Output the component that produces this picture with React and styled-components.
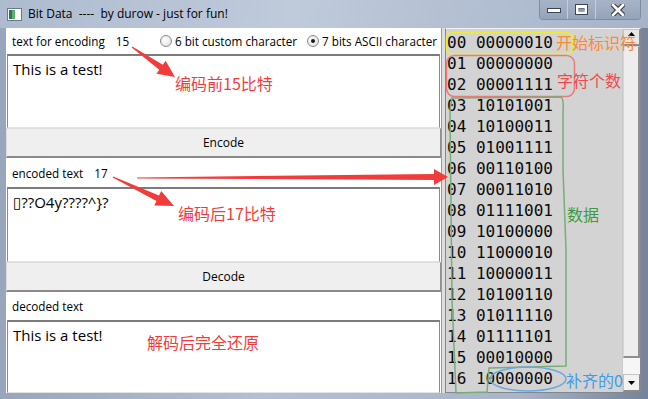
import React from 'react';
import styled, { createGlobalStyle } from 'styled-components';

const GlobalStyle = createGlobalStyle`
  html, body {
    margin: 0;
    padding: 0;
    background: #ffffff;
  }
`;

const bytes = [
  '00000010', '00000000', '00001111', '10101001', '10100011', '01001111',
  '00110100', '00011010', '01111001', '10100000', '11000010', '10000011',
  '10100110', '01011110', '01111101', '00010000', '10000000',
];

const Window = styled.div`
  position: relative;
  width: 648px;
  height: 399px;
  display: flex;
  flex-direction: column;
  overflow: hidden;
  font-family: "Open Sans", "Noto Sans", sans-serif;
  background: linear-gradient(90deg, #98a6bc 0%, #b3c0d3 40%, #a9b6c9 80%, #75839a 100%);
`;

const TitleBar = styled.div`
  height: 28px;
  display: flex;
  align-items: flex-start;
  flex-shrink: 0;
  background: linear-gradient(100deg, #aebbcf 0%, #bfcadb 45%, #a7b4c8 100%);
`;

const AppIcon = styled.svg`
  margin: 8px 0 0 7px;
  flex-shrink: 0;
`;

const Title = styled.div`
  margin: 6px 0 0 6px;
  font-size: 12px;
  line-height: 16px;
  color: #000;
  white-space: pre;
`;

const Controls = styled.div`
  margin-left: auto;
  margin-right: 7px;
  display: flex;
  height: 19px;
  border: 1px solid #7f8da4;
  border-top: none;
  border-radius: 0 0 4px 4px;
  overflow: hidden;
`;

const ControlButton = styled.div`
  width: ${(p) => p.w}px;
  height: 19px;
  display: flex;
  align-items: center;
  justify-content: center;
  background: linear-gradient(180deg, #a7b4c8 0%, #95a3b9 100%);
  border-left: ${(p) => (p.first ? 'none' : '1px solid #c3cddb')};
`;

const Body = styled.div`
  flex: 1;
  display: flex;
  padding: 0 7px 6px 6px;
  min-height: 0;
`;

const LeftPanel = styled.div`
  width: 435px;
  display: flex;
  flex-direction: column;
  background: #ffffff;
`;

const LabelRow = styled.div`
  height: ${(p) => p.h}px;
  display: flex;
  align-items: center;
  padding: 0 4px 0 6px;
  font-size: 11.7px;
  color: #000;
  flex-shrink: 0;
`;

const Count = styled.span`
  margin-left: 11px;
`;

const RadioGroup = styled.div`
  margin-left: auto;
  display: flex;
  align-items: center;
  gap: 10px;
`;

const RadioItem = styled.label`
  display: flex;
  align-items: center;
  gap: 3px;
`;

const RadioDot = styled.span`
  width: 10px;
  height: 10px;
  border-radius: 50%;
  border: 1px solid #8a8a8a;
  background: radial-gradient(circle at 40% 40%, #ffffff 0%, #e6e6e6 70%, #cfcfcf 100%);
  display: flex;
  align-items: center;
  justify-content: center;
  &::after {
    content: '';
    width: 4px;
    height: 4px;
    border-radius: 50%;
    background: ${(p) => (p.checked ? '#1a1a1a' : 'transparent')};
  }
`;

const TextBox = styled.div`
  height: ${(p) => p.h}px;
  margin: 0 1px;
  padding: 3px 5px;
  box-sizing: border-box;
  border: 1px solid #8a8a8a;
  border-top: 2px solid #7c7c7c;
  border-bottom-color: #e3e3e3;
  font-size: 15px;
  line-height: 20px;
  color: #000;
  flex-shrink: 0;
  font-family: "Open Sans", "DejaVu Sans", sans-serif;
`;

const ActionButton = styled.div`
  height: 30px;
  box-sizing: border-box;
  display: flex;
  align-items: center;
  justify-content: center;
  background: #efefef;
  border: 1px solid #dcdcdc;
  border-right-color: #8e8e8e;
  border-bottom: 2px solid #8a8a8a;
  font-size: 12px;
  color: #000;
  flex-shrink: 0;
`;

const Splitter = styled.div`
  width: 4px;
  background: #dedede;
  border-left: 1px solid #9a9a9a;
  box-sizing: border-box;
`;

const ListPanel = styled.div`
  flex: 1;
  display: flex;
  border: 1px solid #828790;
  border-top-color: #f2f2f2;
  background: #d3d3d3;
`;

const Rows = styled.div`
  flex: 1;
  padding: 3px 0 0 1px;
  font-family: "DejaVu Sans Mono", "Liberation Mono", monospace;
  font-size: 16px;
  line-height: 21px;
  color: #0a0a0a;
`;

const Row = styled.div`
  white-space: pre;
`;

const Scrollbar = styled.div`
  width: 17px;
  display: flex;
  flex-direction: column;
  background: #f4f4f4;
  border-left: 1px solid #c9c9c9;
`;

const ScrollArrow = styled.div`
  height: ${(p) => p.h}px;
  display: flex;
  justify-content: center;
  align-items: ${(p) => (p.up ? 'flex-start' : 'center')};
  padding-top: ${(p) => (p.up ? '2px' : '0')};
  box-sizing: border-box;
  background: ${(p) => (p.up ? '#e6e6e6' : '#f2f2f2')};
  border: 1px solid #c4c4c4;
  border-right-color: #8a8a8a;
  border-bottom: 2px solid #8a8a8a;
`;

const Thumb = styled.div`
  flex: 1;
  background: #ededed;
  border: 1px solid #d6d6d6;
  border-right: 2px solid #8f8f8f;
  border-bottom: 2px solid #8f8f8f;
`;

const Track = styled.div`
  height: 16px;
  background: #f6f6f6;
`;

const Overlay = styled.svg`
  position: absolute;
  left: 0;
  top: 0;
  pointer-events: none;
`;

const Note = styled.div`
  position: absolute;
  left: ${(p) => p.x}px;
  top: ${(p) => p.y}px;
  font-family: "Noto Sans CJK SC", "Noto Sans", sans-serif;
  font-size: 16px;
  line-height: 18px;
  color: ${(p) => p.c};
  white-space: nowrap;
`;

function arrow(x1, y1, x2, y2, headLen, headHalf, shaftHalf, tailHalf) {
  const dx = x2 - x1;
  const dy = y2 - y1;
  const len = Math.hypot(dx, dy);
  const ux = dx / len;
  const uy = dy / len;
  const nx = -uy;
  const ny = ux;
  const bx = x2 - ux * headLen;
  const by = y2 - uy * headLen;
  const pts = [
    [x1 + nx * tailHalf, y1 + ny * tailHalf],
    [bx + nx * shaftHalf, by + ny * shaftHalf],
    [bx + nx * headHalf, by + ny * headHalf],
    [x2, y2],
    [bx - nx * headHalf, by - ny * headHalf],
    [bx - nx * shaftHalf, by - ny * shaftHalf],
    [x1 - nx * tailHalf, y1 - ny * tailHalf],
  ];
  return pts.map((p) => p.map((v) => v.toFixed(1)).join(',')).join(' ');
}

export default function App() {
  return (
    <>
      <GlobalStyle />
      <Window>
        <TitleBar>
          <AppIcon width="15" height="13" viewBox="0 0 15 13">
            <rect x="0.5" y="0.5" width="14" height="12" fill="#f4f6f8" stroke="#6f7a88" />
            <rect x="2" y="2" width="3" height="9" fill="#2f6f6a" />
            <rect x="5" y="2" width="3" height="9" fill="#5bb06a" />
            <rect x="8" y="2" width="5" height="9" fill="#ffffff" />
          </AppIcon>
          <Title>{'Bit Data  ----  by durow - just for fun!'}</Title>
          <Controls>
            <ControlButton w={27} first>
              <svg width="14" height="6" viewBox="0 0 14 6">
                <rect x="0.5" y="1.5" width="13" height="4" fill="#fff" stroke="#3c4558" />
              </svg>
            </ControlButton>
            <ControlButton w={27}>
              <svg width="13" height="11" viewBox="0 0 13 11">
                <rect x="0.5" y="0.5" width="12" height="10" fill="#fff" stroke="#3c4558" />
                <rect x="3.5" y="4" width="6" height="3.5" fill="#3c4558" />
                <rect x="4" y="4.5" width="5" height="2.5" fill="#8e9bb1" />
              </svg>
            </ControlButton>
            <ControlButton w={44}>
              <svg width="14" height="12" viewBox="0 0 14 12">
                <path d="M2 1 L12 11 M12 1 L2 11" stroke="#3c4558" strokeWidth="5" strokeLinecap="square" />
                <path d="M2 1 L12 11 M12 1 L2 11" stroke="#fff" strokeWidth="2.6" strokeLinecap="square" />
              </svg>
            </ControlButton>
          </Controls>
        </TitleBar>

        <Body>
          <LeftPanel>
            <LabelRow h={26}>
              text for encoding<Count>15</Count>
              <RadioGroup>
                <RadioItem><RadioDot />6 bit custom character</RadioItem>
                <RadioItem><RadioDot checked />7 bits ASCII character</RadioItem>
              </RadioGroup>
            </LabelRow>
            <TextBox h={74}>This is a test!</TextBox>
            <ActionButton>Encode</ActionButton>
            <LabelRow h={29}>
              encoded text<Count>17</Count>
            </LabelRow>
            <TextBox h={75}>{'\u25AF??O4y????^}?'}</TextBox>
            <ActionButton>Decode</ActionButton>
            <LabelRow h={28}>decoded text</LabelRow>
            <TextBox h={73}>This is a test!</TextBox>
          </LeftPanel>
          <Splitter />
          <ListPanel>
            <Rows>
              {bytes.map((b, i) => (
                <Row key={i}>{`${String(i).padStart(2, '0')} ${b}`}</Row>
              ))}
            </Rows>
            <Scrollbar>
              <ScrollArrow h={17} up>
                <svg width="7" height="4" viewBox="0 0 7 4"><path d="M0 4 L3.5 0 L7 4 Z" fill="#000" /></svg>
              </ScrollArrow>
              <Thumb />
              <Track />
              <ScrollArrow h={18}>
                <svg width="7" height="4" viewBox="0 0 7 4"><path d="M0 0 L7 0 L3.5 4 Z" fill="#000" /></svg>
              </ScrollArrow>
            </Scrollbar>
          </ListPanel>
        </Body>

        <Overlay width="648" height="399" viewBox="0 0 648 399">
          <polygon points={arrow(132, 47, 175, 77, 17, 8, 3, 0.6)} fill="#f23c3c" />
          <polygon points={arrow(113, 177, 174, 206, 18, 8, 3, 0.6)} fill="#f23c3c" />
          <polygon points={arrow(137, 178, 448, 177, 14, 8, 3, 0.5)} fill="#f23c3c" />
          <rect x="446.5" y="32.5" width="126" height="21" rx="5" fill="none" stroke="#ecec3a" strokeWidth="1.5" />
          <rect x="446.5" y="55.5" width="128" height="41" rx="8" fill="none" stroke="#e57b7b" strokeWidth="1.5" />
          <path
            d="M452 98 L561 97 Q564 99 563 112 L563 170 L566 250 L566 366 L489 368 L487 392 L456 393 L452 300 L450 110 Z"
            fill="none"
            stroke="#78ad78"
            strokeWidth="1.5"
          />
          <ellipse cx="528" cy="379" rx="38" ry="12" fill="none" stroke="#6aa8e0" strokeWidth="1.5" />
        </Overlay>

        <Note x={175} y={74} c="#f23c3c">编码前15比特</Note>
        <Note x={178} y={204} c="#f23c3c">编码后17比特</Note>
        <Note x={147} y={333} c="#f23c3c">解码后完全还原</Note>
        <Note x={556} y={33} c="#fb8a32">开始标识符</Note>
        <Note x={557} y={71} c="#f04a4a">字符个数</Note>
        <Note x={567} y={205} c="#3c9c3c">数据</Note>
        <Note x={566} y={371} c="#3d9de6">补齐的0</Note>
      </Window>
    </>
  );
}
